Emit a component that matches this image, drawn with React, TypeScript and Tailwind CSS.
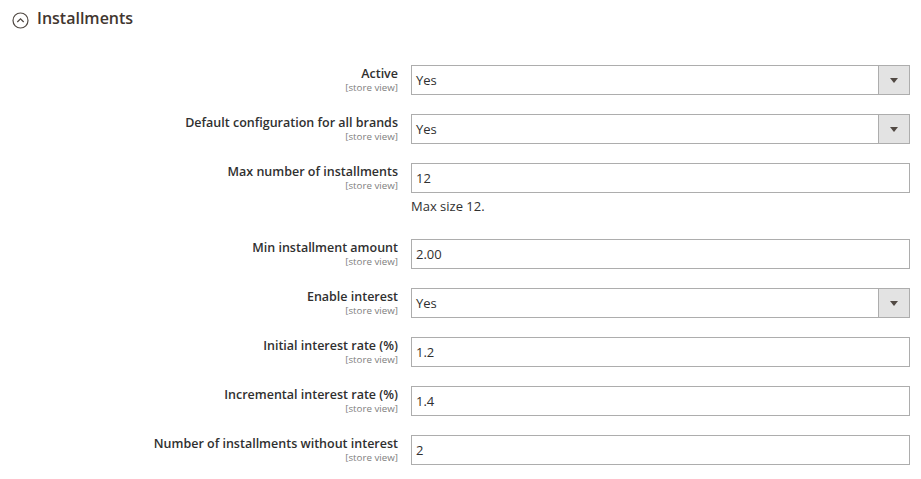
type Field = {
  label: string;
  value: string;
  kind: "select" | "text";
  note?: string;
};

const fields: Field[] = [
  { label: "Active", value: "Yes", kind: "select" },
  { label: "Default configuration for all brands", value: "Yes", kind: "select" },
  { label: "Max number of installments", value: "12", kind: "text", note: "Max size 12." },
  { label: "Min installment amount", value: "2.00", kind: "text" },
  { label: "Enable interest", value: "Yes", kind: "select" },
  { label: "Initial interest rate (%)", value: "1.2", kind: "text" },
  { label: "Incremental interest rate (%)", value: "1.4", kind: "text" },
  { label: "Number of installments without interest", value: "2", kind: "text" },
];

function Control({ field }: { field: Field }) {
  if (field.kind === "select") {
    return (
      <div className="flex h-[30px] w-[499px] border border-[#adadad] bg-white">
        <div className="flex-1 px-[4px] pt-[5px] text-[13px] leading-[18px] text-[#303030]">{field.value}</div>
        <div className="flex w-[31px] items-center justify-center border-l border-[#adadad] bg-[#e3e3e3]">
          <svg width="8" height="5" viewBox="0 0 8 5">
            <path d="M0 0 H8 L4 5 Z" fill="#514943" />
          </svg>
        </div>
      </div>
    );
  }
  return (
    <div className="h-[30px] w-[499px] border border-[#adadad] bg-white px-[4px] pt-[5px] text-[13px] leading-[18px] text-[#303030]">
      {field.value}
    </div>
  );
}

export default function App() {
  return (
    <div className="h-[479px] w-[921px] bg-white font-['Open_Sans',sans-serif] text-[#303030]">
      <div className="flex items-center gap-[8px] pl-[12px] pt-[7px]">
        <svg width="17" height="17" viewBox="0 0 17 17" className="mt-[4px]">
          <circle cx="8.5" cy="8.5" r="7.5" fill="none" stroke="#514943" strokeWidth="1.2" />
          <path d="M5.3 10 L8.5 6.9 L11.7 10" fill="none" stroke="#514943" strokeWidth="1.3" />
        </svg>
        <h2 className="text-[16px] font-semibold leading-[22px] text-[#41362f]">Installments</h2>
      </div>
      <div className="mt-[36px] flex flex-col gap-[19px]">
        {fields.map((f) => (
          <div key={f.label} className="flex">
            <div className="w-[398px] pt-[1px] text-right">
              <div className="text-[12.5px] font-semibold leading-[16px] text-[#303030]">{f.label}</div>
              <div className="text-[9.75px] leading-[12px] text-[#808080]">[store view]</div>
            </div>
            <div className="ml-[13px]">
              <Control field={f} />
              {f.note && (
                <div className="pb-[5px] pt-[5px] text-[13px] leading-[17px] text-[#303030]">{f.note}</div>
              )}
            </div>
          </div>
        ))}
      </div>
    </div>
  );
}
